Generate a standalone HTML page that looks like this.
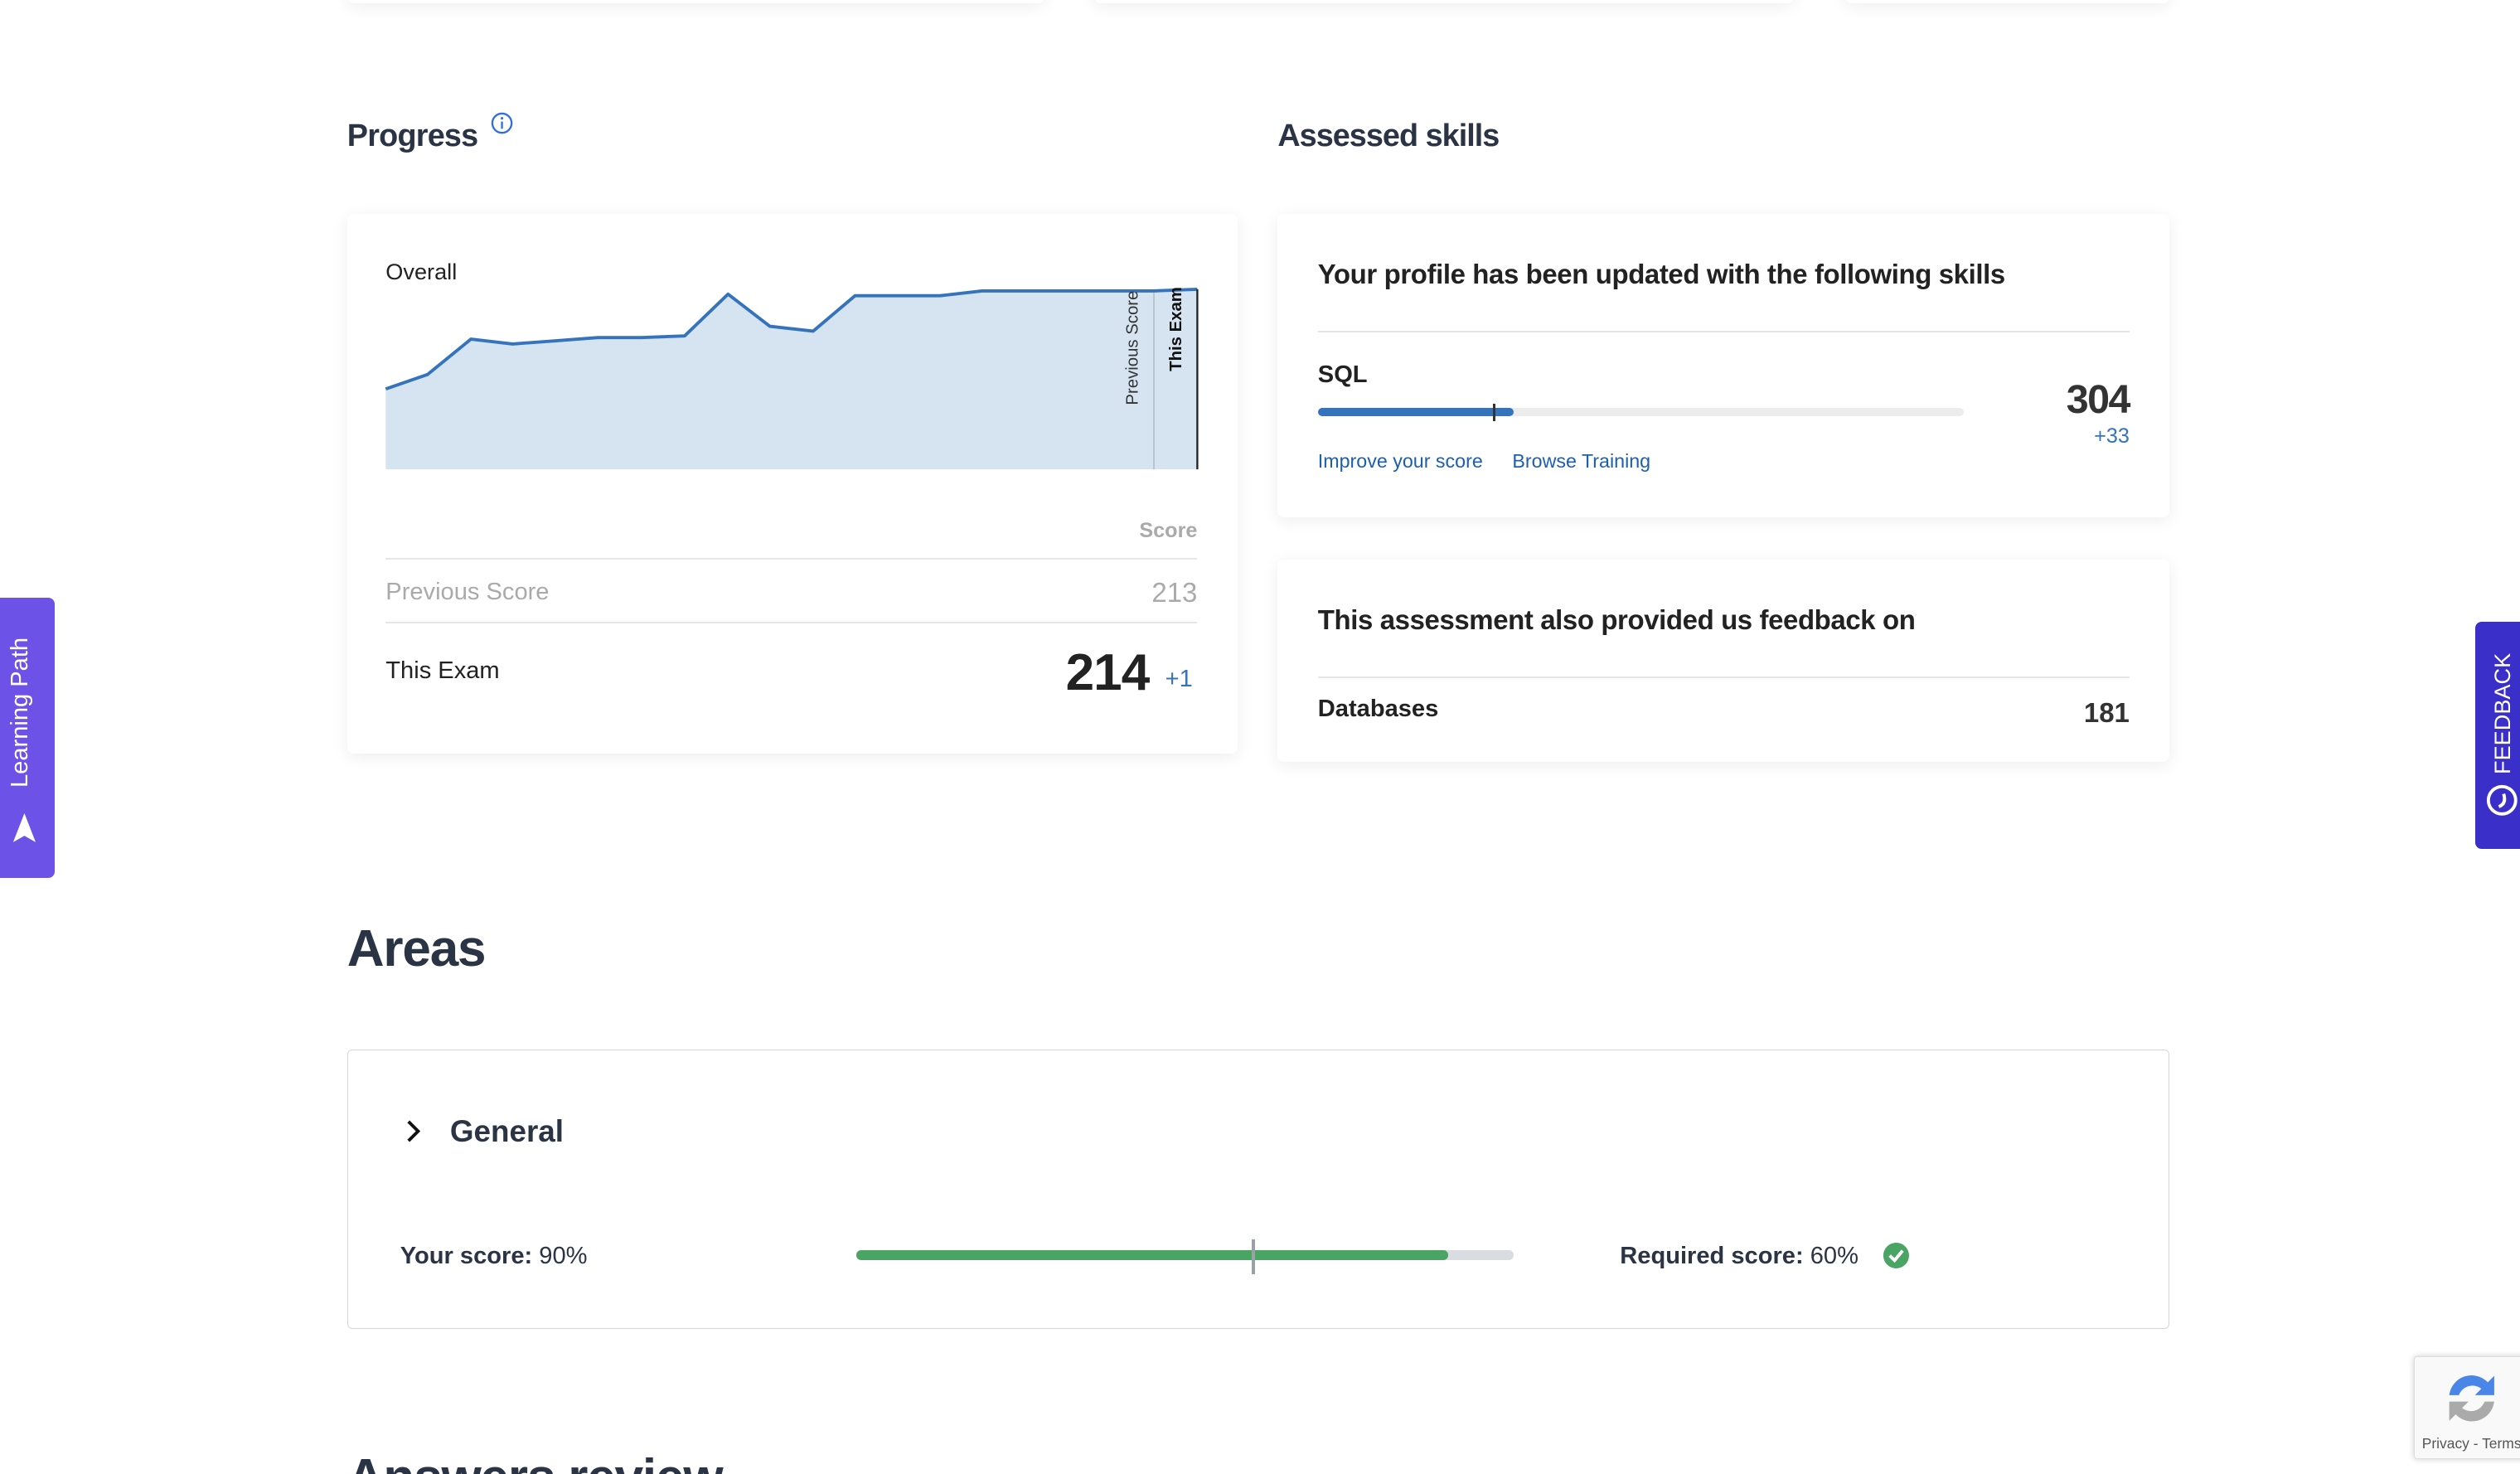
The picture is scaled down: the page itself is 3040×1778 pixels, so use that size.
<!DOCTYPE html>
<html><head><meta charset="utf-8">
<style>
html,body{margin:0;padding:0;background:#fff;}
body{width:3040px;height:1778px;overflow:hidden;position:relative;}
#p{zoom:1.93878;position:absolute;left:0;top:0;width:1568px;height:917px;overflow:hidden;font-family:"Liberation Sans",Arial,sans-serif;color:#2b3445;}
.a{position:absolute;white-space:nowrap;}
.card{position:absolute;background:#fff;border-radius:4px;box-shadow:0 2px 10px rgba(0,0,0,0.07);}
.hr{position:absolute;height:1px;background:#e6e6e6;}
</style></head><body><div id="p">
<div class="card" style="left:216px;top:-20px;width:434px;height:22px;"></div>
<div class="card" style="left:681px;top:-20px;width:435px;height:22px;"></div>
<div class="card" style="left:1148px;top:-20px;width:202px;height:22px;"></div>

<div class="a" style="left:216px;top:74px;font-size:19.5px;font-weight:bold;letter-spacing:-0.4px;">Progress</div>
<svg class="a" style="left:305px;top:69px" width="15" height="15" viewBox="0 0 15 15"><circle cx="7.5" cy="7.5" r="6" fill="none" stroke="#2f6fe0" stroke-width="1.2"/><line x1="7.5" y1="6.5" x2="7.5" y2="11" stroke="#2f6fe0" stroke-width="1.2"/><circle cx="7.5" cy="4.5" r="0.8" fill="#2f6fe0"/></svg>
<div class="a" style="left:795px;top:74px;font-size:19.5px;font-weight:bold;letter-spacing:-0.5px;">Assessed skills</div>

<div class="card" style="left:216px;top:133px;width:554px;height:336px;"></div>
<div class="a" style="left:240px;top:161px;font-size:14px;color:#222;">Overall</div>
<svg class="a" style="left:0;top:0" width="1568" height="300">
<polygon fill="#d6e3f1" points="240,242 266,233 293,211 319,214 346,212 372,210 399,210 426,209 453,183 479,203 506,206 532,184 559,184 585,184 611,181 638,181 665,181 691,181 718,181 745,180 745,292 240,292"/>
<line x1="718" y1="181" x2="718" y2="292" stroke="#b9c4d0" stroke-width="1"/>
<polyline fill="none" stroke="#3574bc" stroke-width="2" stroke-linejoin="round" points="240,242 266,233 293,211 319,214 346,212 372,210 399,210 426,209 453,183 479,203 506,206 532,184 559,184 585,184 611,181 638,181 665,181 691,181 718,181 745,180"/>
<line x1="745" y1="180" x2="745" y2="292" stroke="#222" stroke-width="1.2"/>
<text transform="translate(708,252) rotate(-90)" font-family="Liberation Sans,sans-serif" font-size="10.5" fill="#333">Previous Score</text>
<text transform="translate(735,231) rotate(-90)" font-family="Liberation Sans,sans-serif" font-size="10.5" font-weight="bold" fill="#111">This Exam</text>
</svg>
<div class="a" style="right:823px;top:323px;font-size:13px;font-weight:bold;color:#aaa;">Score</div>
<div class="hr" style="left:240px;top:347px;width:505px;"></div>
<div class="a" style="left:240px;top:360px;font-size:15px;color:#aaa;">Previous Score</div>
<div class="a" style="right:823px;top:359px;font-size:17px;color:#aaa;">213</div>
<div class="hr" style="left:240px;top:387px;width:505px;"></div>
<div class="a" style="left:240px;top:409px;font-size:15px;color:#222;">This Exam</div>
<div class="a" style="right:853px;top:400px;font-size:32px;font-weight:bold;color:#222;letter-spacing:-0.5px;">214</div>
<div class="a" style="left:725px;top:414px;font-size:15px;color:#3574bc;">+1</div>

<div class="card" style="left:795px;top:133px;width:555px;height:189px;"></div>
<div class="a" style="left:820px;top:161px;font-size:17px;font-weight:bold;color:#222;letter-spacing:-0.2px;">Your profile has been updated with the following skills</div>
<div class="hr" style="left:820px;top:206px;width:505px;"></div>
<div class="a" style="left:820px;top:225px;font-size:15px;font-weight:bold;color:#222;">SQL</div>
<div class="a" style="left:820px;top:254px;width:402px;height:5px;border-radius:3px;background:#ececec;"></div>
<div class="a" style="left:820px;top:254px;width:122px;height:5px;border-radius:3px;background:#3574bc;"></div>
<div class="a" style="left:929px;top:251px;width:1.5px;height:11px;background:#333;"></div>
<div class="a" style="right:243px;top:234px;font-size:25px;font-weight:bold;color:#333;letter-spacing:-0.8px;">304</div>
<div class="a" style="right:243px;top:264px;font-size:13px;color:#3574bc;">+33</div>
<div class="a" style="left:820px;top:280px;font-size:12px;color:#1c5fad;">Improve your score</div>
<div class="a" style="left:941px;top:280px;font-size:12px;color:#1c5fad;">Browse Training</div>

<div class="card" style="left:795px;top:348px;width:555px;height:126px;"></div>
<div class="a" style="left:820px;top:376px;font-size:17px;font-weight:bold;color:#222;letter-spacing:-0.2px;">This assessment also provided us feedback on</div>
<div class="hr" style="left:820px;top:421px;width:505px;"></div>
<div class="a" style="left:820px;top:433px;font-size:15px;font-weight:bold;color:#222;">Databases</div>
<div class="a" style="right:243px;top:434px;font-size:17px;font-weight:bold;color:#333;">181</div>

<div class="a" style="left:216px;top:572px;font-size:32px;font-weight:bold;color:#2b3445;letter-spacing:-0.6px;">Areas</div>
<div class="a" style="left:216px;top:653px;width:1133px;height:173px;border:1px solid #d4d6da;border-radius:3px;"></div>
<svg class="a" style="left:250px;top:696px" width="14" height="16" viewBox="0 0 14 16"><polyline points="4,2 10,8 4,14" fill="none" stroke="#111" stroke-width="2"/></svg>
<div class="a" style="left:280px;top:693px;font-size:19px;font-weight:bold;color:#2b3445;">General</div>
<div class="a" style="left:249px;top:773px;font-size:15px;color:#2b3445;"><b>Your score:</b> 90%</div>
<div class="a" style="left:533px;top:778px;width:409px;height:6px;border-radius:3px;background:#d9dce0;"></div>
<div class="a" style="left:533px;top:778px;width:368px;height:6px;border-radius:3px;background:#4aa564;"></div>
<div class="a" style="left:779px;top:771px;width:2px;height:22px;background:#9aa0a6;"></div>
<div class="a" style="left:1008px;top:773px;font-size:15px;color:#2b3445;"><b>Required score:</b> 60%</div>
<svg class="a" style="left:1171px;top:772px" width="18" height="18" viewBox="0 0 18 18"><circle cx="9" cy="9" r="8" fill="#4aa564"/><polyline points="5,9 8,12 13,6" fill="none" stroke="#fff" stroke-width="2"/></svg>

<div class="a" style="left:216px;top:901px;font-size:32px;font-weight:bold;color:#2b3445;letter-spacing:-0.6px;">Answers review</div>

<div class="a" style="left:0;top:372px;width:34px;height:174px;background:#6c52e6;border-radius:0 4px 4px 0;"></div>
<div class="a" style="left:4px;top:490px;transform:rotate(-90deg);transform-origin:0 0;font-size:15px;color:#fff;">Learning Path</div>
<svg class="a" style="left:6px;top:505px" width="18" height="20" viewBox="0 0 18 20"><polygon points="9,1 16,19 9,15 2,19" fill="#fff"/></svg>

<div class="a" style="left:1540px;top:387px;width:30px;height:141px;background:#3a2fc8;border-radius:4px 0 0 4px;"></div>
<div class="a" style="left:1549px;top:482px;transform:rotate(-90deg);transform-origin:0 0;font-size:14px;color:#fff;">FEEDBACK</div>
<svg class="a" style="left:1546px;top:487px" width="22" height="22" viewBox="0 0 22 22"><circle cx="11" cy="11" r="8.5" fill="none" stroke="#fff" stroke-width="2"/><path d="M9,15 Q14,13 12,7" fill="none" stroke="#fff" stroke-width="2"/></svg>

<div class="a" style="left:1502px;top:844px;width:70px;height:63px;background:#f9f9f9;border:1px solid #ddd;border-radius:2px;box-shadow:0 0 4px rgba(0,0,0,0.2);"></div>
<svg class="a" style="left:1518px;top:850px" width="40" height="40" viewBox="0 0 40 40"><path d="M6,18 A14,14 0 0 1 30,10 L34,6 L34,18 L22,18 L26,14 A9,9 0 0 0 12,18 Z" fill="#4a86e8"/><path d="M34,22 A14,14 0 0 1 10,30 L6,34 L6,22 L18,22 L14,26 A9,9 0 0 0 28,22 Z" fill="#aaa"/></svg>
<div class="a" style="left:1507px;top:893px;font-size:9px;color:#555;">Privacy - Terms</div>
</div></body></html>
